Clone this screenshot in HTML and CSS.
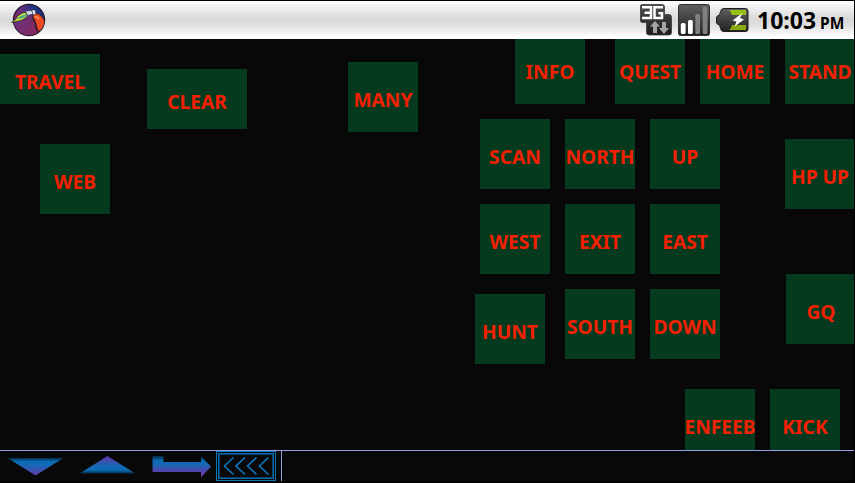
FILE: index.html
```
<!DOCTYPE html>
<html lang="en">
<head>
<meta charset="utf-8">
<title>Button pad</title>
<link rel="stylesheet" href="styles.css">
</head>
<body>
<div class="screen">
  <header class="status">
    <svg class="app-icon" width="36" height="34" viewBox="0 0 36 34">
      <defs>
        <linearGradient id="ball" x1="0" y1="0.7" x2="1" y2="0.2"><stop offset="0" stop-color="#8c2458"/><stop offset=".45" stop-color="#5c2f80"/><stop offset=".8" stop-color="#173585"/></linearGradient>
        <linearGradient id="sweep" x1="0" y1="0" x2="1" y2="1"><stop offset="0" stop-color="#5e3588"/><stop offset="1" stop-color="#8c2658"/></linearGradient>
        <clipPath id="disc"><circle cx="18" cy="17" r="15.3"/></clipPath>
      </defs>
      <circle cx="18" cy="17" r="15.6" fill="url(#ball)" stroke="#24182b" stroke-width="1.200"/>
      <g clip-path="url(#disc)">
        <path d="M2 20Q12 18 20 11Q26 20 26 34H8Q2 28 2 20Z" fill="url(#sweep)"/>
        <path d="M26 28Q25 20 21 13" fill="none" stroke="#28151e" stroke-width="1.200"/>
        <path d="M21.500 13Q23 9.500 27 10.500Q33 14 34 20Q34 27 27 28.500Q25.500 20 21.500 13Z" fill="#ee4a22" stroke="#28151e" stroke-width=".8"/>
        <path d="M24 14Q26 13 28 16" fill="none" stroke="#ff9460" stroke-width="1.500"/>
      </g>
      <path d="M.5 19.500L5 16Q7 11 14.500 9L16.500 13Q12 18 5 18.500Z" fill="#d9dc3a" stroke="#1e3132" stroke-width=".8"/>
      <path d="M6 16.500Q9 12 15 11.500L15.500 13Q11 16 6 16.500Z" fill="#3cae8c"/>
      <path d="M14.500 8L20.500 7.500L22.500 11L16.500 12.500Z" fill="#d5dcee" stroke="#333752" stroke-width=".7"/>
      <path d="M20.500 7H24L25 11.500L22.500 12Z" fill="#f1f1f4" stroke="#333752" stroke-width=".7"/>
    </svg>
    <div class="tray">
      <svg class="net" width="33" height="33" viewBox="0 0 33 33">
        <defs><linearGradient id="tile" x1="0" y1="0" x2="0" y2="1"><stop offset="0" stop-color="#4e4e4e"/><stop offset="1" stop-color="#1c1c1c"/></linearGradient></defs>
        <path d="M2 0.500H22Q24.500 .5 24.500 3V10.500H29Q31.500 10.500 31.500 13V28.500Q31.500 31 29 31H9Q6.500 31 6.500 28.500V18.500H2Q.5 18.500 .5 16.500V2Q.5.5 2 .5Z" fill="url(#tile)" stroke="#3c3c3c" stroke-width=".8"/>
        <path d="M2 3.200H11V14H2M4.500 8.700H10.500M23 3.200H14.500V14H22V9.200H18.500" fill="none" stroke="#fff" stroke-width="2.500"/>
        <path d="M15 17L20 22.500H17V29H13V22.500H10Z" fill="#a5a5a5"/>
        <path d="M24 30L29 24H26V18H22V24H19Z" fill="#a5a5a5"/>
      </svg>
      <svg class="bars" width="33" height="33" viewBox="0 0 33 33">
        <defs><linearGradient id="plate" x1="0" y1="0" x2="0" y2="1"><stop offset="0" stop-color="#606060"/><stop offset="1" stop-color="#202020"/></linearGradient></defs>
        <rect x=".5" y=".5" width="31" height="31" rx="2" fill="url(#plate)" stroke="#303030"/>
        <rect x="2.800" y="19" width="4.800" height="11" rx="1.500" fill="#fff"/>
        <rect x="10" y="16" width="4.800" height="14" rx="1.500" fill="#fff"/>
        <rect x="17.300" y="10" width="4.800" height="20" rx="1.500" fill="#808080"/>
        <rect x="24.700" y="2.500" width="4.800" height="27.500" rx="1.500" fill="#808080"/>
      </svg>
      <svg class="battery" width="33" height="25" viewBox="0 0 33 25">
        <path d="M8 .5H29.500Q32 .5 32 3V21Q32 23.500 29.500 23.500H8Q5 23.500 4.500 20.500L3.500 17Q.5 16.500 .5 14V10Q.5 7.500 3.500 7L4.500 3.500Q5 .5 8 .5Z" fill="url(#plate)" stroke="#1d1d1d"/>
        <path d="M13 2H30V7H16Q15.500 4 13 2Z" fill="#97c010"/>
        <path d="M13 22H30V17H16Q15.500 20 13 22Z" fill="#87ab0e"/>
        <path d="M26.500 5L16.500 12.500L20.500 13.500L18.500 18.500L28 11.500L24 10Z" fill="#fff"/>
      </svg>
      <div class="clock">10:03<span class="meridiem">PM</span></div>
    </div>
  </header>

  <main class="pad">
    <div class="key wide travel">TRAVEL</div>
    <div class="key wide clear">CLEAR</div>
    <div class="key many">MANY</div>
    <div class="key web">WEB</div>
    <div class="key info">INFO</div>
    <div class="key quest">QUEST</div>
    <div class="key home">HOME</div>
    <div class="key stand">STAND</div>
    <div class="key scan">SCAN</div>
    <div class="key north">NORTH</div>
    <div class="key up">UP</div>
    <div class="key hp">HP UP</div>
    <div class="key west">WEST</div>
    <div class="key exit">EXIT</div>
    <div class="key east">EAST</div>
    <div class="key hunt">HUNT</div>
    <div class="key south">SOUTH</div>
    <div class="key down">DOWN</div>
    <div class="key gq">GQ</div>
    <div class="key enfeeb">ENFEEB</div>
    <div class="key kick">KICK</div>
  </main>

  <footer class="toolbar">
    <svg class="tools" width="281" height="30" viewBox="0 0 281 30">
      <defs>
        <linearGradient id="fall" x1="0" y1="0" x2="0" y2="1"><stop offset="0" stop-color="#062c48"/><stop offset=".2" stop-color="#0a6db5"/><stop offset=".45" stop-color="#1767b5"/><stop offset="1" stop-color="#6937a5"/></linearGradient>
        <linearGradient id="rise" x1="0" y1="1" x2="0" y2="0"><stop offset="0" stop-color="#062c48"/><stop offset=".2" stop-color="#0a6db5"/><stop offset=".45" stop-color="#1767b5"/><stop offset="1" stop-color="#6937a5"/></linearGradient>
        <linearGradient id="turn" x1="0" y1="0" x2="0" y2="1"><stop offset="0" stop-color="#062c48"/><stop offset=".22" stop-color="#0a6db5"/><stop offset=".4" stop-color="#1767b5"/><stop offset=".75" stop-color="#5a40aa"/><stop offset="1" stop-color="#6937a5"/></linearGradient>
      </defs>
      <path d="M7.500 7H63.500L35.500 24.500Z" fill="url(#fall)"/>
      <path d="M79.500 22.500H135.500L107.500 5Z" fill="url(#rise)"/>
      <path d="M152.500 5H163.500V11H201V5.500L211 15.500L201 26.500V21H152.500Z" fill="url(#turn)"/>
      <rect x="216.500" y=".5" width="59" height="29" fill="none" stroke="#0878b6"/>
      <rect x="218.800" y="2.800" width="54.400" height="24.400" fill="none" stroke="#0868a8" stroke-width="1.600"/>
      <path d="M233.500 6.500L224.500 15L233.500 23.500M245 6.500L236 15L245 23.500M256.500 6.500L247.500 15L256.500 23.500M268.500 6.500L259.500 15L268.500 23.500" fill="none" stroke="#0c75bd" stroke-width="1.700"/>
    </svg>
    <div class="entry"></div>
  </footer>
</div>
</body>
</html>
```
FILE: styles.css
```
body {
  margin: 0;
  background: #000;
  font-family: "Noto Sans", "Open Sans", sans-serif;
}

.screen {
  display: flex;
  flex-direction: column;
  width: 854px;
  height: 483px;
  overflow: hidden;
}

.status {
  display: flex;
  justify-content: space-between;
  flex: none;
  box-sizing: border-box;
  height: 39px;
  border-top: 1px solid #000;
  background: linear-gradient(#fff 0%, #eee 20%, #d9d9d9 48%, #e0e0e0 65%, #fff 94%, #fff 100%);
}

.app-icon {
  margin: 2px 0 0 11px;
}

.tray {
  display: flex;
  align-items: flex-start;
}

.net {
  margin: 3px 5px 0 0;
}

.bars {
  margin: 3px 5px 0 0;
}

.battery {
  margin: 7px 8px 0 0;
}

.clock {
  width: 97px;
  height: 38px;
  line-height: 38px;
  font-size: 23px;
  font-weight: 700;
  white-space: nowrap;
  color: #000;
}

.meridiem {
  margin-left: 4px;
  font-size: 15.5px;
}

.pad {
  position: relative;
  flex: none;
  height: 411px;
  overflow: hidden;
  background: #080808;
}

.key {
  position: absolute;
  display: flex;
  align-items: center;
  justify-content: center;
  box-sizing: border-box;
  width: 70px;
  height: 70px;
  padding-top: 5px;
  background: #063a1e;
  color: #f42004;
  font-size: 19.2px;
  font-weight: 700;
  line-height: 28px;
  white-space: nowrap;
}

.wide { width: 100px; }

.travel { left: 0; top: 15px; height: 50px; }
.clear { left: 147px; top: 30px; height: 60px; }
.many { left: 348px; top: 23px; }
.web { left: 40px; top: 105px; }
.info { left: 515px; top: -5px; }
.quest { left: 615px; top: -5px; }
.home { left: 700px; top: -5px; }
.stand { left: 785px; top: -5px; }
.scan { left: 480px; top: 80px; }
.north { left: 565px; top: 80px; }
.up { left: 650px; top: 80px; }
.hp { left: 785px; top: 100px; }
.west { left: 480px; top: 165px; }
.exit { left: 565px; top: 165px; }
.east { left: 650px; top: 165px; }
.hunt { left: 475px; top: 255px; }
.south { left: 565px; top: 250px; }
.down { left: 650px; top: 250px; }
.gq { left: 786px; top: 235px; }
.enfeeb { left: 685px; top: 350px; }
.kick { left: 770px; top: 350px; }

.toolbar {
  display: flex;
  flex: none;
  height: 30px;
  border-top: 1px solid #949ee6;
  background: #080808;
}

.tools {
  flex: none;
}

.entry {
  flex: 1;
  border-left: 1px solid #949ee6;
}
```
